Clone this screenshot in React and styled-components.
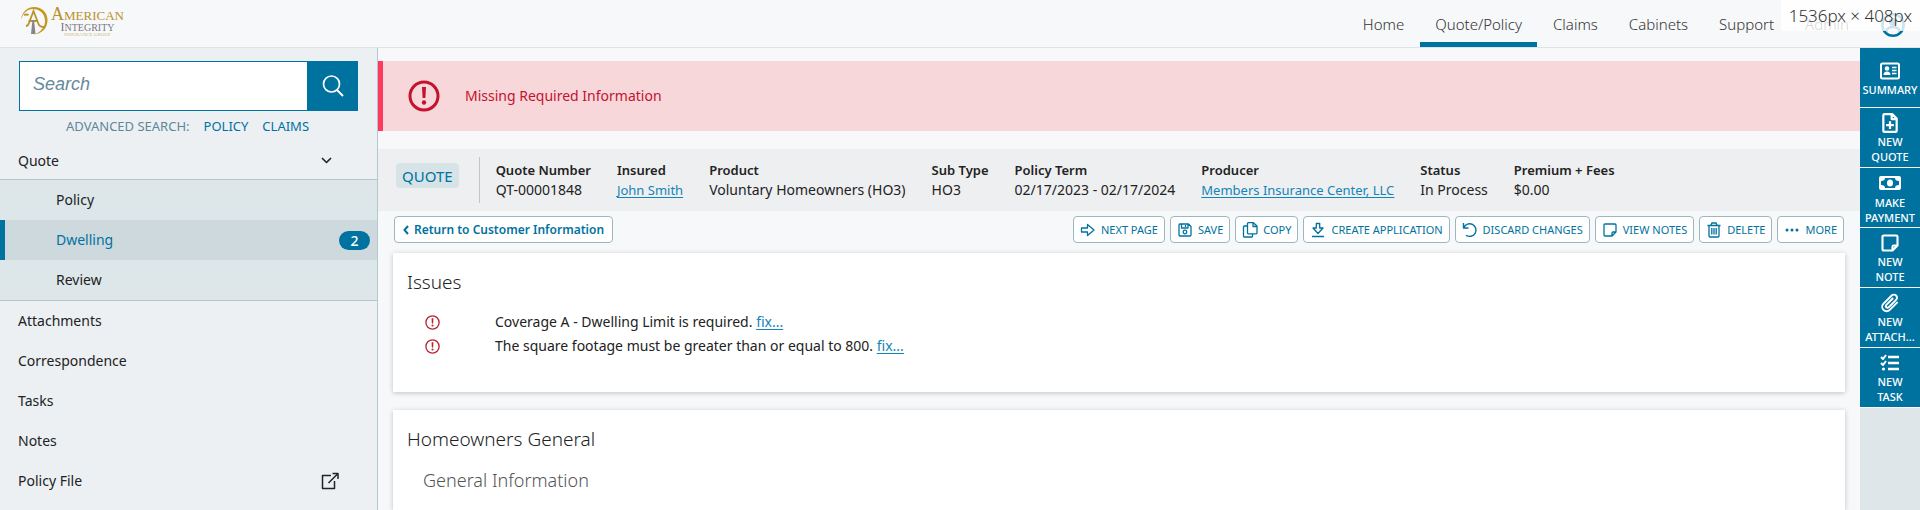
import React from "react";
import styled, { createGlobalStyle } from "styled-components";

const BLUE = "#0072a0";

const GlobalStyle = createGlobalStyle`
  *, *::before, *::after { box-sizing: border-box; }
  body {
    margin: 0;
    background: #f7f8fa;
    color: #222;
    font: 14px/20px "Noto Sans", "Open Sans", sans-serif;
  }
  button, input { font: inherit; color: inherit; }
  h1, h2, h3, ul, dl, dd, p { margin: 0; padding: 0; }
  ul { list-style: none; }
`;

const Page = styled.div`
  min-height: 100vh;
  display: flex;
  flex-direction: column;
`;

const Header = styled.header`
  height: 48px;
  display: flex;
  justify-content: space-between;
  border-bottom: 1px solid #dce6e8;
`;

const Brand = styled.a`
  display: flex;
  gap: 2px;
  padding: 6px 0 0 19px;
  text-decoration: none;
  font-family: "Liberation Serif", serif;
`;

const BrandText = styled.span`
  display: flex;
  flex-direction: column;
  align-items: center;
  padding-top: 1px;
`;

const BrandLine = styled.span`
  font-size: ${(p) => p.$size}px;
  line-height: ${(p) => p.$line}px;
  color: ${(p) => p.$color};
  small { font-size: ${(p) => p.$small}px; }
`;

const TopNav = styled.nav`
  display: flex;
  gap: 1px;
  font-size: 15px;
  font-weight: 300;
`;

const NavLink = styled.a`
  padding: 14px 15px 0;
  border-bottom: 5px solid ${(p) => (p.$active ? BLUE : "transparent")};
  color: #333;
  text-decoration: none;
`;

const Profile = styled.button`
  width: 55px;
  padding: 7px 0 0;
  border: 0;
  background: none;
  color: ${BLUE};
`;

const SizeTip = styled.div`
  position: absolute;
  top: 0;
  right: 0;
  padding: 6px 8px 5px;
  background: rgba(255, 255, 255, 0.8);
  color: #333;
  font-size: 17px;
  font-weight: 300;
`;

const Body = styled.div`
  flex: 1;
  display: flex;
`;

const Sidebar = styled.aside`
  width: 378px;
  flex: none;
  background: #ecf0f3;
  border-right: 1px solid #b4c7cd;
`;

const SearchForm = styled.form`
  display: flex;
  height: 50px;
  margin: 13px 19px 0;
`;

const SearchInput = styled.input`
  flex: 1;
  min-width: 0;
  padding: 0 13px 4px;
  border: 1px solid ${BLUE};
  border-radius: 0;
  background: #fff;
  font-family: "Liberation Sans", sans-serif;
  font-size: 18px;
  font-style: italic;
  &::placeholder { color: #64899a; opacity: 1; }
`;

const SearchButton = styled.button`
  width: 50px;
  padding: 0;
  display: grid;
  place-items: center;
  border: 0;
  background: ${BLUE};
  color: #fff;
`;

const Advanced = styled.div`
  display: flex;
  gap: 14px;
  padding: 5px 0 0 66px;
  color: #5f8797;
  font-size: 13px;
  a { color: ${BLUE}; text-decoration: none; }
`;

const MenuItem = styled.a`
  display: flex;
  align-items: center;
  justify-content: space-between;
  height: ${(p) => (p.$head ? 43 : 40)}px;
  padding: 0 38px 0 18px;
  padding-top: ${(p) => (p.$head ? 6 : 0)}px;
  color: #222;
  text-decoration: none;
`;

const SubMenu = styled.ul`
  border: solid #b4c7cd;
  border-width: 1px 0;
  background: #dde6e9;
`;

const SubItem = styled.a`
  display: flex;
  align-items: center;
  justify-content: space-between;
  height: 40px;
  padding: 0 7px 0 51px;
  border-left: 5px solid ${(p) => (p.$active ? BLUE : "transparent")};
  background: ${(p) => (p.$active ? "#ced9dd" : "transparent")};
  color: ${(p) => (p.$active ? BLUE : "#222")};
  text-decoration: none;
`;

const Count = styled.span`
  width: 31px;
  height: 19px;
  border-radius: 10px;
  background: ${BLUE};
  color: #fff;
  line-height: 19px;
  text-align: center;
  font-weight: 500;
`;

const Main = styled.main`
  flex: 1;
  min-width: 0;
  display: flex;
  flex-direction: column;
`;

const Alert = styled.div`
  display: flex;
  align-items: center;
  gap: 25px;
  height: 70px;
  margin-top: 13px;
  padding-left: 25px;
  border-left: 5px solid #ff3a5f;
  background: #f7d7da;
  color: #c4122f;
`;

const InfoBar = styled.section`
  display: flex;
  align-items: center;
  height: 62px;
  margin-top: 18px;
  padding-left: 18px;
  background: #eeeff1;
`;

const Badge = styled.span`
  align-self: flex-start;
  margin: 14px 20px 0 0;
  padding: 3px 6px 2px;
  border-radius: 4px;
  background: #d6e4e8;
  color: ${BLUE};
  font-size: 15px;
`;

const Facts = styled.dl`
  display: flex;
  align-items: center;
  gap: 26px;
  height: 46px;
  padding-left: 16px;
  border-left: 1px solid #bfc6ca;
  white-space: nowrap;
  dt { font-weight: 600; font-size: 13px; }
`;

const TextLink = styled.a`
  color: #1484b8;
  font-size: ${(p) => (p.$small ? 13 : 14)}px;
  text-underline-offset: 2px;
`;

const Toolbar = styled.div`
  display: flex;
  justify-content: space-between;
  padding: 5px 16px 0;
`;

const Actions = styled.div`
  display: flex;
  gap: 5px;
`;

const ToolButton = styled.button`
  display: flex;
  align-items: center;
  gap: 5px;
  height: 27px;
  padding: 0 ${(p) => (p.$strong ? 8 : 6)}px;
  border: 1px solid #9db7c0;
  border-radius: 4px;
  background: #fff;
  color: ${BLUE};
  font-size: ${(p) => (p.$strong ? 12 : 11)}px;
  font-weight: ${(p) => (p.$strong ? 600 : 400)};
  white-space: nowrap;
`;

const Card = styled.section`
  margin: ${(p) => (p.$first ? 10 : 18)}px 15px 0;
  padding: 19px 14px ${(p) => (p.$first ? 34 : 0)}px;
  flex: ${(p) => (p.$first ? "none" : "1")};
  background: #fff;
  box-shadow: 0 1px 5px rgba(0, 0, 0, 0.22);
`;

const CardTitle = styled.h2`
  font-size: 19px;
  line-height: 20px;
  font-weight: 300;
  color: #222;
`;

const SubTitle = styled.h3`
  padding: 21px 0 0 16px;
  font-size: 18px;
  line-height: 20px;
  font-weight: 300;
  color: #555;
`;

const IssueList = styled.ul`
  padding: 18px 0 0 18px;
`;

const Issue = styled.li`
  display: flex;
  align-items: center;
  gap: 55px;
  height: 24px;
  color: #222;
  svg { color: #b9232f; }
`;

const Rail = styled.aside`
  width: 60px;
  flex: none;
  background: #dee6e9;
`;

const RailButton = styled.button`
  display: flex;
  flex-direction: column;
  align-items: center;
  justify-content: center;
  gap: 1px;
  width: 60px;
  height: 60px;
  padding: 2px 0 0;
  border: 0;
  border-bottom: 1px solid #f7f8fa;
  background: ${BLUE};
  color: #fff;
  font-size: 11px;
  line-height: 15px;
  font-weight: 500;
`;

const Icon = ({ size = 16, w = 1.3, box = 16, children }) => (
  <svg width={size} height={size} viewBox={`0 0 ${box} ${box}`} fill="none" stroke="currentColor"
    strokeWidth={w} strokeLinejoin="round" aria-hidden="true">{children}</svg>
);

const NoteIcon = (p) => (
  <Icon {...p}><path d="M2 3q0-1 1-1h10q1 0 1 1v7l-4 4H3q-1 0-1-1zM14 10h-3q-1 0-1 1v3" /></Icon>
);

const WarningIcon = ({ size, w }) => (
  <Icon size={size} box={32} w={w}>
    <circle cx="16" cy="16" r={15 - w / 3} />
    <path d="M14 7h4l-.6 11h-2.8z" fill="currentColor" stroke="none" />
    <circle cx="16" cy="22.5" r="2.2" fill="currentColor" stroke="none" />
  </Icon>
);

const icons = {
  next: <Icon><path d="M1.5 6h6V2.5L14 8l-6.500 5.500V10h-6z" /></Icon>,
  save: <Icon><path d="M2 3q0-1 1-1h8.500L14 4.500V13q0 1-1 1H3q-1 0-1-1zM4.500 2v4H11V2M8.500 3v2" /><circle cx="8" cy="10" r="1.800" /></Icon>,
  copy: <Icon><path d="M5.500 1.500q0-.8.8-.8h5L15 4v7q0 .8-.8.800H6.300q-.8 0-.8-.800zM11 1v3.500h4M5.500 4H2.300q-.8 0-.8.800v9.400q0 .8.8.800h7.400q.8 0 .8-.800V12" /></Icon>,
  create: <Icon><path d="M6.300 1.500h3.400V6H13l-5 5.500L3 6h3.300zM2 14.500h12" /></Icon>,
  discard: <Icon w={1.4}><path d="M1.500 1v5h5M1.800 5.800A6.300 6.300 0 1 1 4 13.200" /></Icon>,
  note: <NoteIcon />,
  trash: <Icon><path d="M1.500 3.500h13M5 3.500l.8-2.500h4.400l.8 2.500M3 3.500v10.500q0 1 1 1h8q1 0 1-1V3.500M5.800 6v6.500M8 6v6.500M10.200 6v6.500" /></Icon>,
  more: <Icon w={0}><g fill="currentColor"><circle cx="3" cy="8" r="1.500" /><circle cx="8" cy="8" r="1.500" /><circle cx="13" cy="8" r="1.500" /></g></Icon>,
  summary: <Icon size={20} box={20} w={2}><rect x="1" y="2.500" width="18" height="15" rx="1.500" /><g fill="currentColor" stroke="none"><circle cx="7" cy="7.500" r="2.300" /><path d="M3.500 14q0-3.500 3.500-3.500t3.500 3.500z" /></g><path d="M12 6.500h4.500M12 9.500h4.500M12 12.500h4.500" strokeWidth="1.300" /></Icon>,
  quote: <Icon size={20} box={18} w={2}><path d="M3 2q0-1 1-1h7l4 4v11q0 1-1 1H4q-1 0-1-1zM10.500 1v4.500H15M9 7.500v7M5.500 11h7" /></Icon>,
  money: <Icon size={22} box={22} w={2}><rect x="1" y="5" width="20" height="12" rx="1" /><g fill="currentColor" stroke="none"><ellipse cx="11" cy="11" rx="3" ry="3.600" /><path d="M2 6h4q0 3-4 3zM20 6h-4q0 3 4 3zM2 16h4q0-3-4-3zM20 16h-4q0-3 4-3z" /></g></Icon>,
  railNote: <NoteIcon size={20} w={1.7} />,
  clip: <Icon size={20} box={24} w={2.300}><path d="M20.500 11.500l-8.800 8.800a5.300 5.300 0 0 1-7.500-7.500l9.800-9.800a3.700 3.700 0 0 1 5.300 5.300l-8.800 8.800a2 2 0 0 1-2.900-2.900l7.600-7.600" strokeLinecap="round" /></Icon>,
  tasks: <Icon size={20} box={20} w={2}><path d="M8 4h11M8 10h11M8 16h11" strokeWidth="2.300" /><path d="M1 4l2 2 3-4M1 10l2 2 3-4" /><circle cx="3.500" cy="16" r="1.600" fill="currentColor" stroke="none" /></Icon>,
};

const facts = [
  ["Quote Number", "QT-00001848"],
  ["Insured", "John Smith", true],
  ["Product", "Voluntary Homeowners (HO3)"],
  ["Sub Type", "HO3"],
  ["Policy Term", "02/17/2023 - 02/17/2024"],
  ["Producer", "Members Insurance Center, LLC", true],
  ["Status", "In Process"],
  ["Premium + Fees", "$0.00"],
];

const tools = [
  ["next", "NEXT PAGE"], ["save", "SAVE"], ["copy", "COPY"], ["create", "CREATE APPLICATION"],
  ["discard", "DISCARD CHANGES"], ["note", "VIEW NOTES"], ["trash", "DELETE"], ["more", "MORE"],
];

const shortcuts = [
  ["summary", "SUMMARY"], ["quote", "NEW", "QUOTE"], ["money", "MAKE", "PAYMENT"],
  ["railNote", "NEW", "NOTE"], ["clip", "NEW", "ATTACH..."], ["tasks", "NEW", "TASK"],
];

const issues = [
  "Coverage A - Dwelling Limit is required.",
  "The square footage must be greater than or equal to 800.",
];

const Logo = () => (
  <svg width="30" height="30" viewBox="0 0 30 30" fill="none" aria-hidden="true">
    <path d="M2 14C3 5 9 1 15 1c8 0 14 6 13.500 14C28 23 22 28 15 28.500 22 26 26 21 26 15 26 7 20 3 14 3 8 3 4 7 2 14z" fill="#c39a1c" />
    <path d="M5 9q3-1 4.500 0M7 20q2 0 3-3l4.500-12 5 13q1 3 6 3M9.500 15h8" stroke="#b8922a" strokeWidth="1.800" />
    <path d="M12 28l1.500-14h1.500l1.500 14z" fill="#85858b" />
  </svg>
);

export default function App() {
  return (
    <Page>
      <GlobalStyle />
      <Header>
        <Brand href="#home" aria-label="American Integrity Insurance Group">
          <Logo />
          <BrandText>
            <BrandLine $size={18} $small={13} $line={15} $color="#b8922a">A<small>MERICAN</small></BrandLine>
            <BrandLine $size={12} $small={10} $line={9} $color="#777980">I<small>NTEGRITY</small></BrandLine>
            <BrandLine $size={5} $small={5} $line={6} $color="#cdb878">INSURANCE GROUP</BrandLine>
          </BrandText>
        </Brand>
        <TopNav>
          {["Home", "Quote/Policy", "Claims", "Cabinets", "Support", "Admin"].map((name) => (
            <NavLink key={name} href="#nav" $active={name === "Quote/Policy"}>{name}</NavLink>
          ))}
          <Profile type="button" aria-label="Profile">
            <Icon size={24} box={24} w={2.500}>
              <circle cx="12" cy="12" r="10.700" />
              <circle cx="12" cy="9" r="4" fill="currentColor" stroke="none" />
              <path d="M5 18q2-4 7-4t7 4" />
            </Icon>
          </Profile>
        </TopNav>
        <SizeTip>1536px × 408px</SizeTip>
      </Header>
      <Body>
        <Sidebar>
          <SearchForm role="search">
            <SearchInput type="text" placeholder="Search" aria-label="Search" />
            <SearchButton type="button" aria-label="Search">
              <Icon size={22} box={22} w={1.700}><circle cx="9.500" cy="9" r="8" /><path d="M15 15l6 6" strokeWidth="2" /></Icon>
            </SearchButton>
          </SearchForm>
          <Advanced>
            <span>ADVANCED SEARCH:</span>
            <a href="#policy">POLICY</a>
            <a href="#claims">CLAIMS</a>
          </Advanced>
          <nav>
            <MenuItem href="#quote" $head>
              Quote
              <Icon size={18} box={18} w={1.600}><path d="M1 6l4.500 4.500L10 6" /></Icon>
            </MenuItem>
            <SubMenu>
              <li><SubItem href="#policy">Policy</SubItem></li>
              <li><SubItem href="#dwelling" $active>Dwelling <Count>2</Count></SubItem></li>
              <li><SubItem href="#review">Review</SubItem></li>
            </SubMenu>
            {["Attachments", "Correspondence", "Tasks", "Notes"].map((name) => (
              <MenuItem key={name} href="#menu">{name}</MenuItem>
            ))}
            <MenuItem href="#file">
              Policy File
              <Icon size={18} box={18} w={1.500}><path d="M10 3.500H1.500v13h12V9M7.500 11L16 2.500M11.500 1.500H17V7" /></Icon>
            </MenuItem>
          </nav>
        </Sidebar>
        <Main>
          <Alert role="alert"><WarningIcon size={32} w={3} />Missing Required Information</Alert>
          <InfoBar>
            <Badge>QUOTE</Badge>
            <Facts>
              {facts.map(([label, value, link]) => (
                <div key={label}>
                  <dt>{label}</dt>
                  <dd>{link ? <TextLink href="#detail" $small>{value}</TextLink> : value}</dd>
                </div>
              ))}
            </Facts>
          </InfoBar>
          <Toolbar>
            <ToolButton type="button" $strong>
              <svg width="6" height="10" viewBox="0 0 6 10" fill="none" stroke="currentColor" strokeWidth="2" aria-hidden="true"><path d="M5 1L1.500 5 5 9" /></svg>
              Return to Customer Information
            </ToolButton>
            <Actions>
              {tools.map(([icon, label]) => (
                <ToolButton key={label} type="button">{icons[icon]}{label}</ToolButton>
              ))}
            </Actions>
          </Toolbar>
          <Card $first>
            <CardTitle>Issues</CardTitle>
            <IssueList>
              {issues.map((text) => (
                <Issue key={text}>
                  <WarningIcon size={15} w={2.800} />
                  <span>{text} <TextLink href="#fix">fix...</TextLink></span>
                </Issue>
              ))}
            </IssueList>
          </Card>
          <Card>
            <CardTitle>Homeowners General</CardTitle>
            <SubTitle>General Information</SubTitle>
          </Card>
        </Main>
        <Rail>
          {shortcuts.map(([icon, first, second]) => (
            <RailButton key={icon} type="button">
              {icons[icon]}
              <span>{first}{second && <><br />{second}</>}</span>
            </RailButton>
          ))}
        </Rail>
      </Body>
    </Page>
  );
}
